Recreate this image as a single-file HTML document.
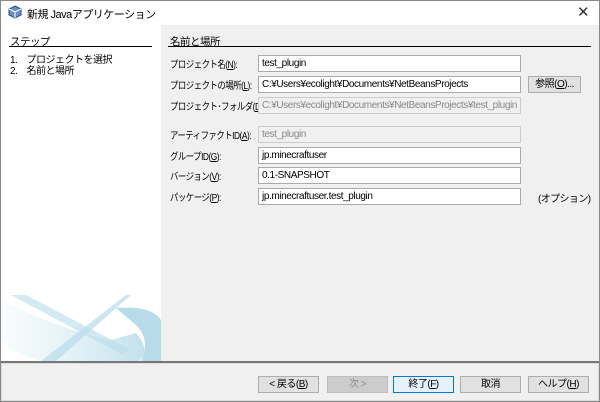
<!DOCTYPE html>
<html><head><meta charset="utf-8"><style>
*{margin:0;padding:0;box-sizing:border-box}
body{width:600px;height:402px;overflow:hidden;background:#fff;font-family:"Liberation Sans","Noto Sans CJK JP",sans-serif;font-size:11px;color:#000;position:relative}
.win{position:absolute;left:0;top:0;width:600px;height:402px;border:1px solid #888}
.a{position:absolute;white-space:nowrap}
.in{position:absolute;left:258px;width:263px;height:17px;background:#fff;border:1px solid #aaa;padding:1px 3px;font-size:10px;letter-spacing:-0.4px;line-height:14px;white-space:nowrap;overflow:hidden}
.dis{background:#f0f0f0;color:#888;border-color:#ccc}
.lb{position:absolute;left:170px;font-size:10px;letter-spacing:-0.6px;white-space:nowrap;transform:scaleX(0.84);transform-origin:0 0;margin-top:-1px}
.btn{position:absolute;top:376px;height:17px;background:#e1e1e1;border:1px solid #adadad;text-align:center;font-size:10px;letter-spacing:-0.5px;line-height:15px;white-space:nowrap}
</style></head><body>
<div class="win"></div>
<svg class="a" style="left:8px;top:5px" width="14" height="14" viewBox="0 0 14 14"><path d="M7 1L13 4V10L7 13L1 10V4Z" fill="#6a8fc0" stroke="#2a4a80"/><path d="M1 4L7 7L13 4M7 7V13" stroke="#fff" fill="none"/></svg>
<div class="a" style="left:27px;top:6px;font-size:11px;letter-spacing:-0.5px">新規 Javaアプリケーション</div>
<div class="a" style="left:577px;top:3px;font-size:15px;color:#333">✕</div>
<div class="a" style="left:161px;top:25px;width:438px;height:336px;background:#f0f0f0"></div>
<svg class="a" style="left:1px;top:290px" width="160" height="71" viewBox="0 0 160 71"><defs><linearGradient id="g" x1="0" x2="1"><stop offset="0" stop-color="#cfe8f0" stop-opacity="0.2"/><stop offset="1" stop-color="#a8d4e4"/></linearGradient></defs>
<path d="M0 10Q60 40 110 50L135 43Q150 60 138 71H40Q0 60 0 45Z" fill="url(#g)" opacity="0.7"/>
<path d="M10 5H25L130 60L120 64Z" fill="#b7dcea" opacity="0.6"/>
<path d="M40 71L125 5H130L55 71Z" fill="#b7dcea" opacity="0.7"/>
<path d="M115 18Q150 15 160 30V71H140Q150 50 135 35Z" fill="#a5d2e3" opacity="0.8"/></svg>
<div class="a" style="left:10px;top:34px;font-size:10.5px;letter-spacing:-0.5px">ステップ</div>
<div class="a" style="left:9px;top:46px;width:143px;height:1px;background:#000"></div>
<div class="a" style="left:10px;top:55px;font-size:10px;line-height:11px;letter-spacing:-0.5px">1.&nbsp;&nbsp;&nbsp;&nbsp;プロジェクトを選択<br>2.&nbsp;&nbsp;&nbsp;&nbsp;名前と場所</div>
<div class="a" style="left:170px;top:34px;font-size:10.5px;letter-spacing:-0.5px">名前と場所</div>
<div class="a" style="left:168px;top:46px;width:423px;height:1px;background:#000"></div>
<div class="lb" style="top:57px">プロジェクト名(<u>N</u>):</div><div class="in" style="top:55px">test_plugin</div>
<div class="lb" style="top:78px">プロジェクトの場所(<u>L</u>):</div><div class="in" style="top:76px">C:¥Users¥ecolight¥Documents¥NetBeansProjects</div>
<div class="btn" style="left:528px;top:76px;width:53px">参照(<u>O</u>)...</div>
<div class="lb" style="top:99px">プロジェクト･フォルダ(<u>D</u>):</div><div class="in dis" style="top:97px">C:¥Users¥ecolight¥Documents¥NetBeansProjects¥test_plugin</div>
<div class="lb" style="top:128px">アーティファクトID(<u>A</u>):</div><div class="in dis" style="top:126px">test_plugin</div>
<div class="lb" style="top:149px">グループID(<u>G</u>):</div><div class="in" style="top:147px">jp.minecraftuser</div>
<div class="lb" style="top:169px">バージョン(<u>V</u>):</div><div class="in" style="top:167px">0.1-SNAPSHOT</div>
<div class="lb" style="top:190px">パッケージ(<u>P</u>):</div><div class="in" style="top:188px">jp.minecraftuser.test_plugin</div>
<div class="a" style="left:538px;top:190px;font-size:10px;letter-spacing:-0.6px">(オプション)</div>
<div class="a" style="left:1px;top:361px;width:598px;height:2px;background:#777"></div>
<div class="a" style="left:1px;top:363px;width:598px;height:38px;background:#f0f0f0;border:1px solid #ddd"></div>
<div class="btn" style="left:258px;width:61px">&lt; 戻る(<u>B</u>)</div>
<div class="btn" style="left:327px;width:61px;background:#ccc;border-color:#bfbfbf;color:#888">次 &gt;</div>
<div class="btn" style="left:393px;width:61px;border-color:#0078d7;background:#e5f1fb">終了(<u>F</u>)</div>
<div class="btn" style="left:460px;width:61px">取消</div>
<div class="btn" style="left:528px;width:61px">ヘルプ(<u>H</u>)</div>
</body></html>
